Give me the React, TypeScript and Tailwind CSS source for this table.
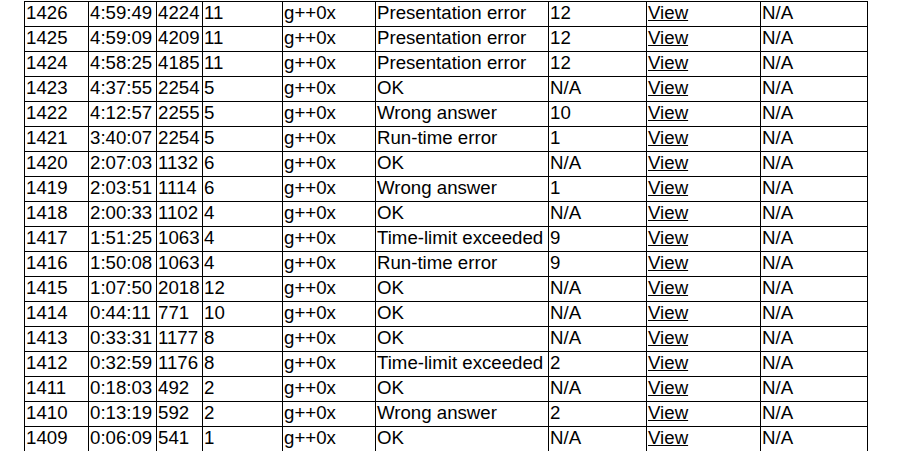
import React from "react";

const rows: [string, string, string, string, string, string, string][] = [
  ["1426", "4:59:49", "4224", "11", "g++0x", "Presentation error", "12"],
  ["1425", "4:59:09", "4209", "11", "g++0x", "Presentation error", "12"],
  ["1424", "4:58:25", "4185", "11", "g++0x", "Presentation error", "12"],
  ["1423", "4:37:55", "2254", "5", "g++0x", "OK", "N/A"],
  ["1422", "4:12:57", "2255", "5", "g++0x", "Wrong answer", "10"],
  ["1421", "3:40:07", "2254", "5", "g++0x", "Run-time error", "1"],
  ["1420", "2:07:03", "1132", "6", "g++0x", "OK", "N/A"],
  ["1419", "2:03:51", "1114", "6", "g++0x", "Wrong answer", "1"],
  ["1418", "2:00:33", "1102", "4", "g++0x", "OK", "N/A"],
  ["1417", "1:51:25", "1063", "4", "g++0x", "Time-limit exceeded", "9"],
  ["1416", "1:50:08", "1063", "4", "g++0x", "Run-time error", "9"],
  ["1415", "1:07:50", "2018", "12", "g++0x", "OK", "N/A"],
  ["1414", "0:44:11", "771", "10", "g++0x", "OK", "N/A"],
  ["1413", "0:33:31", "1177", "8", "g++0x", "OK", "N/A"],
  ["1412", "0:32:59", "1176", "8", "g++0x", "Time-limit exceeded", "2"],
  ["1411", "0:18:03", "492", "2", "g++0x", "OK", "N/A"],
  ["1410", "0:13:19", "592", "2", "g++0x", "Wrong answer", "2"],
  ["1409", "0:06:09", "541", "1", "g++0x", "OK", "N/A"],
];

const cell =
  "h-[25px] border-r border-b border-black pl-[1px] leading-[21px] whitespace-nowrap overflow-hidden";

export default function App() {
  return (
    <div
      className="bg-white min-h-[451px] h-[451px] overflow-hidden text-black"
      style={{ fontFamily: '"Liberation Sans", Arial, sans-serif' }}
    >
      <div className="ml-[24px] mt-[1px] w-fit border-l border-t border-black grid grid-cols-[64px_68px_46px_80px_93px_173px_98px_114px_107px] text-[18.67px]">
        {rows.map((r) => (
          <React.Fragment key={r[0]}>
            <div className={cell}>{r[0]}</div>
            <div className={cell}>{r[1]}</div>
            <div className={cell}>{r[2]}</div>
            <div className={cell}>{r[3]}</div>
            <div className={cell}>{r[4]}</div>
            <div className={cell}>{r[5]}</div>
            <div className={cell}>{r[6]}</div>
            <div className={cell}>
              <a href="#" className="underline text-black">View</a>
            </div>
            <div className={cell}>N/A</div>
          </React.Fragment>
        ))}
      </div>
    </div>
  );
}
